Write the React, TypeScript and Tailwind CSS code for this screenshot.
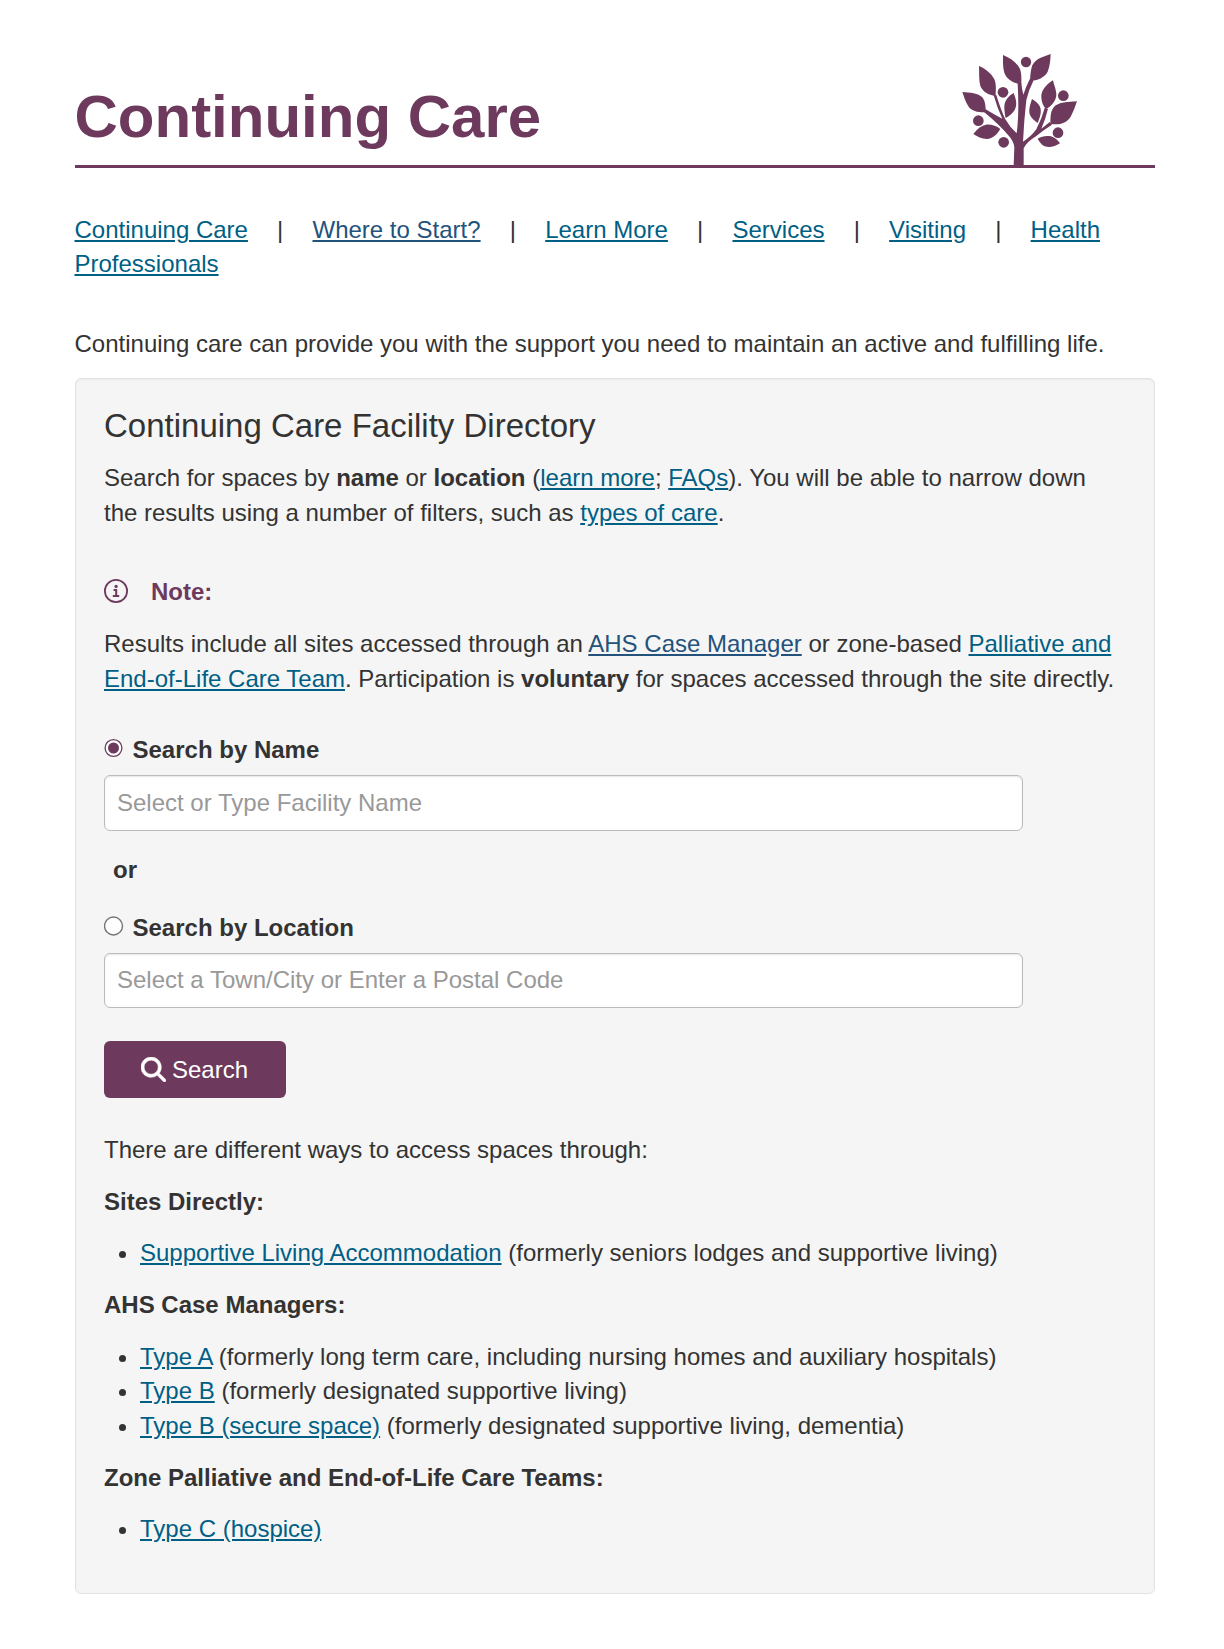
import React from 'react';
import { FaMagnifyingGlass } from 'react-icons/fa6';

function Link({ children, visited = false }: { children: React.ReactNode; visited?: boolean }) {
  return (
    <a href="#" className={visited ? 'text-[#23527c] underline' : 'text-[#005f85] underline'}>
      {children}
    </a>
  );
}

function Tree() {
  return (
    <svg width="115" height="111" viewBox="36 42 345 333" className="mr-[78px] block" fill="#6d3a5d">
      <path d="M191 375L193 322Q192 308 180 292Q150 255 102 216L107 208Q140 228 157 236Q142 205 131 166L139 165Q152 208 165 236Q180 262 200 280Q208 220 203 131L214 130Q216 150 220 164Q228 140 239 118L251 121Q236 150 229 180Q222 240 219 305Q243 290 259 268Q276 235 284 204L294 206Q286 240 274 266Q285 258 299 246L306 254Q280 270 258 289Q230 306 221 325L221 375Z" />
      <path d="M37 156C60 157 85 160 97 172C107 185 106 200 108 217C85 218 65 213 56 200C46 186 42 170 37 156Z" />
      <path d="M87 78C105 86 125 100 133 118C140 135 137 152 137 168C115 165 98 155 91 138C86 120 88 98 87 78Z" />
      <path d="M159 45C180 54 203 68 211 90C215 105 214 118 214 133C190 130 170 118 163 98C158 80 159 62 159 45Z" />
      <path d="M302 42C280 50 258 55 247 76C242 90 241 105 240 122C262 122 285 112 293 95C300 78 301 60 302 42Z" />
      <path d="M191 159C175 168 162 182 163 205C164 218 165 226 167 234C182 226 195 215 198 198C201 185 195 170 191 159Z" />
      <path d="M246 177C240 195 235 212 240 225C245 236 254 242 263 249C270 232 276 215 270 200C265 190 255 183 246 177Z" />
      <path d="M309 121C290 133 273 150 274 172C275 190 281 198 287 207C305 200 320 180 319 162C318 148 312 135 309 121Z" />
      <path d="M381 184C355 186 325 185 310 203C300 218 302 235 301 251C325 257 350 250 362 230C371 214 376 198 381 184Z" />
      <path d="M70 282C83 265 95 256 108 254C125 253 140 258 151 267C142 282 130 295 113 297C97 298 82 290 70 282Z" />
      <path d="M263 296C275 288 290 286 303 289C315 293 323 301 330 310C315 320 298 324 284 319C274 314 268 305 263 296Z" />
      <circle cx="228" cy="66" r="15.5" />
      <circle cx="159" cy="157" r="16" />
      <circle cx="85" cy="242" r="16" />
      <circle cx="161" cy="307" r="16" />
      <circle cx="340" cy="167" r="16" />
      <circle cx="324" cy="278" r="16" />
    </svg>
  );
}

function Radio({ checked = false }: { checked?: boolean }) {
  return (
    <svg width="20" height="20" viewBox="0.5 0 20 20" className="mr-[9px] block">
      {checked ? (
        <>
          <circle cx="10" cy="10" r="8.4" fill="#fff" stroke="#6d3a5d" strokeWidth="1.3" />
          <circle cx="10" cy="10" r="5.5" fill="#6d3a5d" />
        </>
      ) : (
        <circle cx="10" cy="10" r="9" fill="#fff" stroke="#767676" strokeWidth="1.4" />
      )}
    </svg>
  );
}

const navItems = ['Continuing Care', 'Where to Start?', 'Learn More', 'Services', 'Visiting', 'Health Professionals'];

const inputClass =
  'block w-[919px] rounded-[6px] border border-[#bbb] bg-white pl-[12px] pr-[11px] text-[24px] text-[#555] shadow-[inset_0_1px_2px_rgba(0,0,0,0.1)] outline-none placeholder:text-[#999] placeholder:opacity-100';

export default function App() {
  return (
    <main className="min-h-[1649px] bg-white pl-[74.5px] font-['Liberation_Sans',Arial,sans-serif] text-[24px] leading-[34.29px] text-[#333]">
      <div className="w-[1080px]">
        <header className="flex h-[168px] items-end justify-between border-b-[3px] border-[#6d3a5d]">
          <h1 className="pb-[15px] text-[60px] font-bold leading-[66px] text-[#6d3a5d]">Continuing Care</h1>
          <Tree />
        </header>

        <nav className="mt-[45px]">
          {navItems.map((item, i) => (
            <React.Fragment key={item}>
              {i > 0 && (
                <>
                  {' '}
                  <span className="mx-[22.5px]">|</span>{' '}
                </>
              )}
              <Link visited={i === 1}>{item}</Link>
            </React.Fragment>
          ))}
        </nav>

        <p className="mt-[45px]">
          Continuing care can provide you with the support you need to maintain an active and fulfilling life.
        </p>

        <section className="mt-[17px] h-[1216px] rounded-[6px] border border-[#e3e3e3] bg-[#f5f5f5] px-[28.5px] pt-[29px] shadow-[inset_0_1px_2px_rgba(0,0,0,0.05)]">
          <h2 className="text-[33px] leading-[36px]">Continuing Care Facility Directory</h2>
          <p className="mt-[16px] leading-[35px]">
            Search for spaces by <b>name</b> or <b>location</b> (<Link>learn more</Link>; <Link>FAQs</Link>). You will be
            able to narrow down
            <br />
            the results using a number of filters, such as <Link>types of care</Link>.
          </p>

          <div className="mt-[45px] flex items-center font-bold text-[#6d3a5d]">
            <svg width="24" height="24" viewBox="0 0 24 24" className="mb-[2px] mr-[23px]">
              <circle cx="12" cy="12" r="11.1" fill="none" stroke="#6d3a5d" strokeWidth="1.8" />
              <circle cx="12.1" cy="7.4" r="1.6" fill="#6d3a5d" />
              <path d="M9.6 11H12.2V17M8.8 17.1H15.2" fill="none" stroke="#6d3a5d" strokeWidth="2" />
            </svg>
            Note:
          </div>

          <p className="mt-[16.5px] leading-[35px]">
            Results include all sites accessed through an <Link visited>AHS Case Manager</Link> or zone-based{' '}
            <Link>
              Palliative and
              <br />
              End-of-Life Care Team
            </Link>
            . Participation is <b>voluntary</b> for spaces accessed through the site directly.
          </p>

          <label className="-ml-[0.5px] mt-[37px] flex items-start font-bold">
            <span className="pt-[5px]">
              <Radio checked />
            </span>
            Search by Name
          </label>
          <input className={`${inputClass} mt-[8px] h-[56px]`} placeholder="Select or Type Facility Name" />

          <p className="mt-[22px] pl-[9px] font-bold">or</p>

          <label className="-ml-[0.5px] mt-[24px] flex items-start font-bold">
            <span className="pt-[5px]">
              <Radio />
            </span>
            Search by Location
          </label>
          <input className={`${inputClass} mt-[7.5px] h-[55px] pb-[2px]`} placeholder="Select a Town/City or Enter a Postal Code" />

          <button className="mt-[33px] flex h-[57px] w-[182px] items-center rounded-[6px] bg-[#6d3a5d] pl-[37px] text-white">
            <FaMagnifyingGlass size={25} strokeWidth={10} className="mr-[6px]" />
            <span className="pt-[2px]">Search</span>
          </button>

          <div className="mt-[35px] leading-[34.5px]">
            <p>There are different ways to access spaces through:</p>
            <p className="mt-[17px] font-bold">Sites Directly:</p>
            <ul className="mt-[17px] list-disc pl-[36px]">
              <li>
                <Link>Supportive Living Accommodation</Link> (formerly seniors lodges and supportive living)
              </li>
            </ul>
            <p className="mt-[17px] font-bold">AHS Case Managers:</p>
            <ul className="mt-[17.5px] list-disc pl-[36px]">
              <li>
                <Link>Type A</Link> (formerly long term care, including nursing homes and auxiliary hospitals)
              </li>
              <li>
                <Link>Type B</Link> (formerly designated supportive living)
              </li>
              <li>
                <Link>Type B (secure space)</Link> (formerly designated supportive living, dementia)
              </li>
            </ul>
            <p className="mt-[18px] font-bold">Zone Palliative and End-of-Life Care Teams:</p>
            <ul className="mt-[16px] list-disc pl-[36px]">
              <li>
                <Link>Type C (hospice)</Link>
              </li>
            </ul>
          </div>
        </section>
      </div>
    </main>
  );
}
